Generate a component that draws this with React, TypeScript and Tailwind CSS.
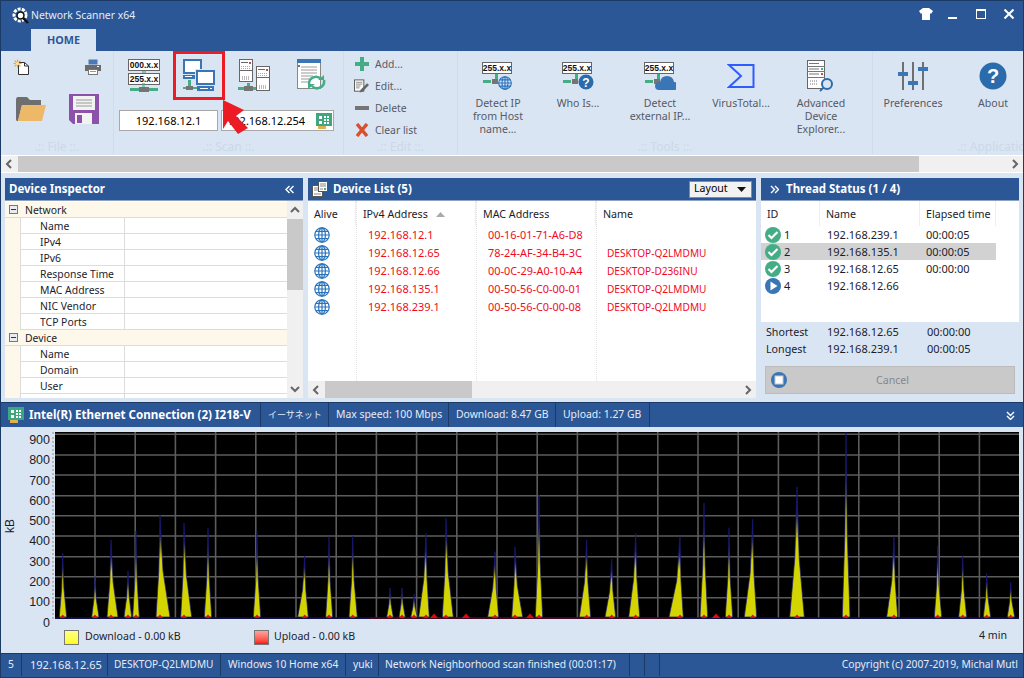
import React from "react";

const BLUE = "#3a75b5";
const GREEN = "#45ad85";
const GRAY = "#757575";

function FaintLabel({ text, className = "" }: { text: string; className?: string }) {
  return <div className={"h-[16px] shrink-0 text-center text-[12px] leading-[16px] text-[#cbd8ea] whitespace-nowrap " + className}>{text}</div>;
}

function Globe({ size = 16 }: { size?: number }) {
  return (
    <svg width={size} height={size} viewBox="0 0 16 16" fill="none" stroke="#2a74bd" strokeWidth="1.2" className="shrink-0">
      <circle cx="8" cy="8" r="7.2" />
      <ellipse cx="8" cy="8" rx="3.4" ry="7.2" />
      <path d="M8 .8v14.4M.8 8h14.4M1.8 4.4h12.4M1.8 11.6h12.4" />
    </svg>
  );
}

function DoubleChev({ dir, className = "" }: { dir: "left" | "right" | "down"; className?: string }) {
  const d = {
    left: "M4.5 1L1 4.5 4.5 8M8.5 1L5 4.5 8.5 8",
    right: "M1 1l3.5 3.5L1 8M5 1l3.5 3.5L5 8",
    down: "M1 1l3.5 3.5L8 1M1 5l3.5 3.5L8 5",
  }[dir];
  return (
    <svg width="9" height="9" viewBox="0 0 9 9" fill="none" stroke="#fff" strokeWidth="1.4" className={"shrink-0 " + className}>
      <path d={d} />
    </svg>
  );
}

function Logo() {
  return (
    <svg width="18" height="18" viewBox="0 0 18 18" className="shrink-0">
      <circle cx="8" cy="8" r="6" fill="none" stroke="#fff" strokeWidth="3" strokeDasharray="3 1.2" />
      <circle cx="8.5" cy="8.5" r="3.4" fill="#fff" stroke="#111" strokeWidth="1.4" />
      <path d="M11 11l5 5" stroke="#111" strokeWidth="2.4" />
    </svg>
  );
}

function NewFile() {
  return (
    <svg width="17" height="16" viewBox="0 0 17 16" className="shrink-0">
      <path d="M5.5 3.5h6l4 3.5v8.5h-10z" fill="#fff" stroke="#333" />
      <path d="M11.5 3.5v3.5h4" fill="none" stroke="#333" />
      <g stroke="#f0a030" strokeWidth="1.1">
        <path d="M4.5 0.5v8M0.5 4.5h8M1.6 1.6l5.8 5.8M7.4 1.6l-5.8 5.8" />
      </g>
      <circle cx="4.5" cy="4.5" r="1.6" fill="#fbe7a0" />
    </svg>
  );
}

function Printer() {
  return (
    <svg width="16" height="16" viewBox="0 0 16 16" className="shrink-0">
      <rect x="3.5" y="0.5" width="9" height="5" fill="#4a7ab5" />
      <path d="M0 6h16v6h-3v-2H3v2H0z" fill="#6b6b6b" />
      <rect x="3.5" y="10.5" width="9" height="5" fill="#fff" stroke="#777" />
      <path d="M5 12.5h6" stroke="#999" />
      <rect x="12" y="7" width="2" height="1" fill="#fff" />
    </svg>
  );
}

function Folder() {
  return (
    <svg width="30" height="24" viewBox="0 0 30 24" className="shrink-0">
      <path d="M0 3q0-3 2-3h9l3 3h11v5H6L2 24H1q-1 0-1-2z" fill="#6e6e6e" />
      <path d="M6 8h24l-4 16H2z" fill="#edb868" />
    </svg>
  );
}

function Floppy() {
  return (
    <svg width="30" height="30" viewBox="0 0 30 30" className="shrink-0">
      <path d="M0 0h30v30H4l-4-4z" fill="#8c52a9" />
      <rect x="4" y="2" width="22" height="14" fill="#f2f2f2" />
      <path d="M7 6h16M7 9h16M7 12h16" stroke="#9a9a9a" />
      <rect x="6" y="19" width="17" height="11" fill="#f2f2f2" />
      <rect x="8" y="21" width="5" height="8" fill="#8c52a9" />
    </svg>
  );
}

function Net({ x = 0, y = 0 }: { x?: number; y?: number }) {
  return (
    <g transform={`translate(${x} ${y})`}>
      <rect x="0" y="1" width="9" height="3" fill={GREEN} />
      <rect x="9" y="0" width="10" height="5" fill={GRAY} />
      <rect x="19" y="1" width="9" height="3" fill={GREEN} />
      <rect x="12" y="-4" width="3" height="4" fill={GREEN} opacity=".6" />
    </g>
  );
}

const MASK_FONT = "Liberation Sans, sans-serif";

function IpRange() {
  return (
    <svg width="32" height="33" viewBox="0 0 32 33" className="shrink-0">
      <rect x="0.5" y="0.5" width="31" height="11" fill="#fff" stroke="#666" />
      <text x="16" y="9" textAnchor="middle" fontSize="8.5" fontWeight="700" fontFamily={MASK_FONT} fill="#111">000.x.x</text>
      <rect x="0.5" y="14.5" width="31" height="11" fill="#fff" stroke="#666" />
      <text x="16" y="23" textAnchor="middle" fontSize="8.5" fontWeight="700" fontFamily={MASK_FONT} fill="#111">255.x.x</text>
      <rect x="14" y="12" width="4" height="2" fill={GREEN} opacity=".6" />
      <Net x={2} y={28} />
    </svg>
  );
}

function NetComputers() {
  return (
    <svg width="32" height="33" viewBox="0 0 32 33" className="shrink-0">
      <rect x="1" y="1" width="17" height="13" fill="#fff" stroke={BLUE} strokeWidth="2" />
      <rect x="0" y="16" width="13" height="4" fill={BLUE} />
      <rect x="2" y="17" width="7" height="1" fill="#fff" />
      <rect x="12" y="10" width="20" height="17" fill="#dae5f3" />
      <rect x="14" y="12" width="17" height="13" fill="#fff" stroke={BLUE} strokeWidth="2" />
      <rect x="14" y="27" width="17" height="5" fill={BLUE} />
      <rect x="17" y="29" width="8" height="1" fill="#fff" />
      <rect x="27" y="29" width="2" height="1" fill="#fff" />
      <rect x="5" y="21" width="3" height="6" fill={GREEN} />
      <rect x="3" y="27" width="7" height="4" fill={GRAY} />
      <rect x="0" y="28" width="3" height="2" fill={GREEN} />
      <rect x="10" y="28" width="4" height="2" fill={GREEN} />
    </svg>
  );
}

function Tower({ x, y, w, h }: { x: number; y: number; w: number; h: number }) {
  return (
    <g transform={`translate(${x} ${y})`}>
      <rect x="0.5" y="0.5" width={w - 1} height={h - 1} fill="#fff" stroke="#666" />
      <path d={`M2 3.5h${w - 7}`} stroke="#666" />
      <rect x={w - 4} y="3" width="2" height="2" fill="#c0504d" />
      <path d={`M2 7.5h${w - 4}M2 9.5h${w - 4}`} stroke="#aaa" strokeDasharray="1 1" />
      <path d={`M0 11.5h${w}`} stroke="#666" />
      <path d={`M3 ${h - 5}h${w - 6}M3 ${h - 3}h${w - 6}`} stroke="#777" strokeDasharray="1 1" />
    </g>
  );
}

function Servers() {
  return (
    <svg width="32" height="33" viewBox="0 0 32 33" className="shrink-0">
      <Tower x={1} y={0} w={14} h={23} />
      <Tower x={18} y={7} w={14} h={25} />
      <rect x="0" y="28" width="6" height="3" fill={GREEN} />
      <rect x="6" y="27" width="9" height="5" fill={GRAY} />
      <rect x="15" y="28" width="3" height="3" fill={GREEN} />
      <rect x="9" y="24" width="3" height="3" fill={GREEN} />
    </svg>
  );
}

function Report() {
  return (
    <svg width="29" height="32" viewBox="0 0 29 32" className="shrink-0">
      <rect x="0.5" y="0.5" width="23" height="29" fill="#fff" stroke="#888" />
      <rect x="0" y="0" width="24" height="4" fill={BLUE} />
      <path d="M4 8h16M4 11h16M4 14h16M4 17h12M4 20h10M4 23h8" stroke="#9a9a9a" />
      <rect x="1" y="6" width="2" height="2" fill="#777" />
      <path d="M12 25a7 7 0 0 1 12-5" fill="none" stroke={GREEN} strokeWidth="2.5" />
      <path d="M27 21a7 7 0 0 1-12 6" fill="none" stroke={GREEN} strokeWidth="2.5" />
      <path d="M21 21h6v-5zM18 25h-7v5z" fill={GREEN} />
    </svg>
  );
}

function Board({ size = 16 }: { size?: number }) {
  return (
    <svg width={size} height={size} viewBox="0 0 16 16" className="shrink-0">
      <rect x="0" y="0" width="16" height="13" fill="#3fa67f" />
      <path d="M3 3h3v3H3zM3 8h3v3H3z" fill="#fff" />
      <path d="M8 3h2v2H8zM11 3h2v2h-2zM8 6h2v2H8zM11 6h2v2h-2zM8 9h2v2H8zM11 9h2v2h-2z" fill="#fff" />
      <rect x="2" y="13" width="8" height="3" fill="#e0b050" />
    </svg>
  );
}

function ToolIcon({ children }: { children?: React.ReactNode }) {
  return (
    <svg width="32" height="32" viewBox="0 0 32 32" className="shrink-0">
      <rect x="0.5" y="2.5" width="29" height="11" fill="#fff" stroke="#666" />
      <text x="15" y="11" textAnchor="middle" fontSize="8.5" fontWeight="700" fontFamily={MASK_FONT} fill="#111">255.x.x</text>
      <rect x="13" y="14" width="3" height="7" fill={GREEN} />
      <rect x="1" y="20" width="8" height="3" fill={GREEN} />
      <rect x="10" y="19" width="6" height="5" fill={GRAY} />
      {children}
    </svg>
  );
}

function ServerGlass() {
  return (
    <svg width="28" height="32" viewBox="0 0 28 32" className="shrink-0">
      <rect x="0.5" y="0.5" width="17" height="28" fill="#fff" stroke="#666" />
      <path d="M2 3.5h10M0 6.5h18M2 9h10M0 11.5h18M2 14h10M0 17.5h18" stroke="#777" />
      <rect x="14" y="8" width="2" height="2" fill={GREEN} />
      <rect x="14" y="13" width="2" height="2" fill="#c0504d" />
      <path d="M3 21h8M3 24h8" stroke="#777" strokeDasharray="1 1" />
      <circle cx="20" cy="24" r="5" fill="#dae5f3" stroke="#2a6cab" strokeWidth="2" />
      <path d="M16 28l-3 3" stroke="#2a6cab" strokeWidth="2" />
    </svg>
  );
}

function ToolButton({ icon, lines, className = "" }: { icon: React.ReactNode; lines: string[]; className?: string }) {
  return (
    <div className={"w-[80px] shrink-0 flex flex-col items-center pt-[9px] " + className}>
      <div className="h-[32px] flex items-center justify-center">{icon}</div>
      <div className="mt-[5px] text-center text-[10.6px] leading-[13px] text-[#565a64] whitespace-nowrap">
        {lines.map((l) => <div key={l}>{l}</div>)}
      </div>
    </div>
  );
}

function Chev({ dir }: { dir: "left" | "right" | "up" | "down" }) {
  const d = { left: "M6 1L2 5l4 4", right: "M3 1l4 4-4 4", up: "M1 7l4-4 4 4", down: "M1 3l4 4 4-4" }[dir];
  return (
    <svg width="10" height="10" viewBox="0 0 10 10" fill="none" stroke="#666" strokeWidth="2" className="shrink-0">
      <path d={d} />
    </svg>
  );
}

function RibbonScroll() {
  return (
    <div className="h-[18px] border-y border-white bg-[#c9c9c9] flex shrink-0">
      <div className="w-[17px] bg-[#f0f0f0] flex items-center justify-center">
        <Chev dir="left" />
      </div>
      <div className="flex-1" />
      <div className="w-[104px] bg-[#f0f0f0] flex items-center justify-end pr-[3px]">
        <Chev dir="right" />
      </div>
    </div>
  );
}

function Ribbon() {
  const edit = [
    { label: "Add...", icon: <svg width="14" height="14" viewBox="0 0 14 14"><path d="M5 0h4v5h5v4H9v5H5V9H0V5h5z" fill={GREEN} /></svg> },
    { label: "Edit...", icon: <svg width="16" height="16" viewBox="0 0 16 16" className="-ml-[1px]"><rect x="0.5" y="1.5" width="10" height="12" fill="#fff" stroke="#555" /><path d="M2 4h7M2 6h7M2 8h5M2 10h4" stroke="#888" /><path d="M14 5l2 2-7 7-3 1 1-3z" fill="#666" /></svg> },
    { label: "Delete", icon: <div className="w-[14px] h-[4px] bg-[#757575]" /> },
    { label: "Clear list", icon: <svg width="14" height="14" viewBox="0 0 14 14"><path d="M2 1l10 12M12 1L2 13" stroke="#d9502e" strokeWidth="3.4" /></svg> },
  ];
  return (
    <div className="h-[104px] shrink-0 bg-[#dae5f3] flex overflow-hidden">
      <div className="w-[113px] shrink-0 border-r border-[#d0dcec] flex flex-col pt-[8px]">
        <div className="flex justify-between pl-[12px] pr-[12px] h-[16px] shrink-0">
          <NewFile />
          <Printer />
        </div>
        <div className="flex items-center pl-[15px] gap-[23px] mt-[19px] h-[30px] shrink-0">
          <Folder />
          <Floppy />
        </div>
        <FaintLabel text=".:: File ::." className="mt-[15px]" />
      </div>
      <div className="w-[230px] shrink-0 border-r border-[#d0dcec] flex flex-col pt-[8px]">
        <div className="flex pl-[14px] h-[33px] shrink-0">
          <IpRange />
          <div className="ml-[23px]"><NetComputers /></div>
          <div className="ml-[23px]"><Servers /></div>
          <div className="ml-[27px]"><Report /></div>
        </div>
        <div className="flex mt-[18px] ml-[5px] gap-[3px] h-[21px] shrink-0 text-[11px] leading-[19px] text-black">
          <div className="w-[99px] border border-[#a8a8a8] bg-white text-center">192.168.12.1</div>
          <div className="w-[113px] border border-[#a8a8a8] bg-white flex items-center pl-[5px] justify-between pr-[1px]">
            <span>192.168.12.254</span>
            <Board />
          </div>
        </div>
        <FaintLabel text=".:: Scan ::." className="mt-[8px]" />
      </div>
      <div className="w-[114px] shrink-0 border-r border-[#d0dcec] flex flex-col pt-[2px]">
        {edit.map((e) => (
          <div key={e.label} className="h-[22px] shrink-0 flex items-center pl-[11px] text-[10.4px] text-[#565a64]">
            <div className="w-[14px] flex justify-center items-center mr-[6px]">{e.icon}</div>
            <span className="pt-[2px]">{e.label}</span>
          </div>
        ))}
        <FaintLabel text=".:: Edit ::." className="-mt-[2px]" />
      </div>
      <div className="w-[415px] shrink-0 border-r border-[#d0dcec] flex flex-col">
        <div className="flex h-[88px] shrink-0">
          <ToolButton lines={["Detect IP", "from Host", "name..."]} icon={<ToolIcon><svg x="16" y="16" width="14" height="14" viewBox="0 0 16 16" fill="none" stroke="#2a74bd" strokeWidth="1.3"><circle cx="8" cy="8" r="7.2" /><ellipse cx="8" cy="8" rx="3.4" ry="7.2" /><path d="M8 .8v14.4M.8 8h14.4M1.8 4.4h12.4M1.8 11.6h12.4" /></svg></ToolIcon>} />
          <ToolButton lines={["Who Is..."]} icon={
            <ToolIcon>
              <circle cx="24" cy="22" r="7.5" fill="#2a6cab" />
              <text x="24" y="26.5" textAnchor="middle" fontSize="12" fontWeight="700" fontFamily="Liberation Sans, sans-serif" fill="#fff">?</text>
            </ToolIcon>} />
          <ToolButton className="ml-[2px]" lines={["Detect", "external IP..."]} icon={
            <ToolIcon>
              <path d="M15 30q-4 0-4-4t5-4q1-6 7-6t7 6q4 0 4 4t-4 4z" fill={BLUE} />
            </ToolIcon>} />
          <ToolButton className="ml-[1px]" lines={["VirusTotal..."]} icon={
            <svg width="28" height="26" viewBox="0 0 28 26" fill="none" stroke="#2f5cff" strokeWidth="2" className="shrink-0"><path d="M2 2h24.5v22H2l12-11z" /></svg>} />
          <ToolButton lines={["Advanced", "Device", "Explorer..."]} icon={<ServerGlass />} />
        </div>
        <FaintLabel text=".:: Tools ::." />
      </div>
      <div className="flex-1 flex flex-col min-w-0">
        <div className="flex h-[88px] shrink-0">
          <ToolButton lines={["Preferences"]} icon={
            <svg width="32" height="30" viewBox="0 0 32 30" className="shrink-0">
              <path d="M6 1v28M16 1v28M26 1v28" stroke="#6f6f6f" strokeWidth="2" />
              <rect x="1" y="11" width="10" height="4" fill={BLUE} />
              <rect x="11" y="20" width="10" height="4" fill={BLUE} />
              <rect x="21" y="6" width="10" height="4" fill={BLUE} />
            </svg>} />
          <ToolButton className="!w-[60px] ml-[10px]" lines={["About"]} icon={
            <svg width="28" height="28" viewBox="0 0 28 28" className="shrink-0">
              <circle cx="14" cy="14" r="13.5" fill="#2a6cab" />
              <text x="14" y="21" textAnchor="middle" fontSize="20" fontWeight="700" fontFamily="Liberation Sans, sans-serif" fill="#fff">?</text>
            </svg>} />
        </div>
        <FaintLabel text=".:: Application ::." className="pl-[84px] !text-left" />
      </div>
    </div>
  );
}

function PanelTitle({ children }: { children: React.ReactNode }) {
  return (
    <div className="h-[23px] shrink-0 bg-[#2b5797] border-b border-[#8ca2c3] flex items-center text-white text-[11.5px] font-bold whitespace-nowrap">
      {children}
    </div>
  );
}

const groups: { title: string; rows: string[] }[] = [
  { title: "Network", rows: ["Name", "IPv4", "IPv6", "Response Time", "MAC Address", "NIC Vendor", "TCP Ports"] },
  { title: "Device", rows: ["Name", "Domain", "User", ""] },
];

function Inspector() {
  return (
    <div className="w-[298px] shrink-0 flex flex-col bg-white overflow-hidden">
      <PanelTitle>
        <span className="pl-[4px] flex-1">Device Inspector</span>
        <DoubleChev dir="left" className="mr-[9px]" />
      </PanelTitle>
      <div className="flex-1 flex min-h-0 overflow-hidden">
        <div className="flex-1 min-w-0 overflow-hidden pt-[1px] text-[10.4px] text-[#1c1c2c]">
          {groups.map((g) => (
            <div key={g.title}>
              <div className="h-[16px] bg-[#fdf8ea] border-b border-[#dcdcdc] flex items-center">
                <div className="w-[9px] h-[9px] ml-[4px] mr-[7px] border border-[#777] bg-[#e8ecf2] flex items-center justify-center">
                  <div className="w-[5px] h-[1px] bg-[#333]" />
                </div>
                <span className="pt-[2px]">{g.title}</span>
              </div>
              {g.rows.map((r, i) => (
                <div key={g.title + i} className="h-[16px] flex bg-[#fdf8ea]">
                  <div className="w-[15px] shrink-0" />
                  <div className="w-[105px] shrink-0 bg-white border-l border-b border-r border-[#dcdcdc] pl-[19px] pt-[1px] leading-[15px]">{r}</div>
                  <div className="flex-1 bg-white border-b border-[#dcdcdc]" />
                </div>
              ))}
            </div>
          ))}
        </div>
        <div className="w-[16px] shrink-0 bg-[#f0f0f0] flex flex-col">
          <div className="h-[18px] flex items-center justify-center"><Chev dir="up" /></div>
          <div className="h-[71px] bg-[#c9c9c9]" />
          <div className="flex-1" />
          <div className="h-[18px] flex items-center justify-center"><Chev dir="down" /></div>
        </div>
      </div>
    </div>
  );
}

const devices = [
  ["192.168.12.1", "00-16-01-71-A6-D8", ""],
  ["192.168.12.65", "78-24-AF-34-B4-3C", "DESKTOP-Q2LMDMU"],
  ["192.168.12.66", "00-0C-29-A0-10-A4", "DESKTOP-D236INU"],
  ["192.168.135.1", "00-50-56-C0-00-01", "DESKTOP-Q2LMDMU"],
  ["192.168.239.1", "00-50-56-C0-00-08", "DESKTOP-Q2LMDMU"],
];

function DeviceList() {
  const cols = [
    { w: "w-[49px]", head: "Alive", cells: devices.map((_, i) => <Globe key={i} />), pad: "pl-[6px]", size: "" },
    { w: "w-[120px]", head: "IPv4 Address", cells: devices.map((d) => d[0]), pad: "pl-[11px]", sort: true, size: "text-[11px]" },
    { w: "w-[120px]", head: "MAC Address", cells: devices.map((d) => d[1]), pad: "pl-[11px]", size: "text-[10.9px]" },
    { w: "w-[159px]", head: "Name", cells: devices.map((d) => d[2]), pad: "pl-[10px]", last: true, size: "text-[10.1px] pt-[1px]" },
  ];
  return (
    <div className="w-[448px] shrink-0 flex flex-col bg-white overflow-hidden">
      <PanelTitle>
        <svg width="16" height="16" viewBox="0 0 16 16" className="ml-[4px] mr-[5px] shrink-0">
          <rect x="0.5" y="4.5" width="10" height="11" fill="#fff" stroke="#555" />
          <path d="M2 7h7M2 9h7M2 13h7" stroke="#888" />
          <rect x="6.5" y="0.5" width="9" height="10" fill="#fff" stroke="#555" />
          <path d="M8 3h6M8 5h6M8 8h3" stroke="#888" />
          <rect x="12" y="7" width="2" height="2" fill={GREEN} />
        </svg>
        <span className="flex-1">Device List (5)</span>
        <div className="w-[63px] h-[17px] mr-[4px] bg-[#f2f2f2] border border-[#8a8a8a] flex items-center pl-[4px] text-[10.6px] font-normal text-black">
          <span className="flex-1">Layout</span>
          <svg width="9" height="5" viewBox="0 0 9 5" className="mr-[5px] shrink-0"><path d="M0 0h9L4.5 5z" fill="#111" /></svg>
        </div>
      </PanelTitle>
      <div className="flex-1 min-h-0 flex">
        {cols.map((c) => (
          <div key={c.head} className={c.w + " shrink-0 border-r border-dotted border-[#e2e2e2] last:border-r-0"}>
            <div className={"h-[25px] flex items-center pt-[1px] text-[10.7px] text-[#1c1c2c] border-r border-[#eeeeee] pl-[6px] " + (c.last ? "border-r-0" : "")}>
              {c.head}
              {c.sort && <svg width="9" height="5" viewBox="0 0 9 5" className="ml-[8px]"><path d="M4.5 0L9 5H0z" fill="#aaa" /></svg>}
            </div>
            <div className={c.pad + " " + c.size}>
              {c.cells.map((v, i) => (
                <div key={i} className="h-[18px] flex items-center text-[#f00a1e] whitespace-nowrap">{v}</div>
              ))}
            </div>
          </div>
        ))}
      </div>
      <div className="h-[17px] shrink-0 bg-[#f0f0f0] flex items-center">
        <div className="w-[17px] flex justify-center"><Chev dir="left" /></div>
        <div className="w-[147px] h-full bg-[#c9c9c9]" />
        <div className="flex-1" />
        <div className="w-[17px] flex justify-center"><Chev dir="right" /></div>
      </div>
    </div>
  );
}

function StatusDot({ play }: { play?: boolean }) {
  return (
    <svg width="16" height="16" viewBox="0 0 16 16" className="shrink-0">
      <circle cx="8" cy="8" r="8" fill={play ? BLUE : GREEN} />
      {play ? <path d="M5.5 3.5l7 4.5-7 4.5z" fill="#fff" /> : <path d="M3.5 8l3 3 6-6" fill="none" stroke="#fff" strokeWidth="2.2" />}
    </svg>
  );
}

const threads = [
  ["1", "192.168.239.1", "00:00:05"],
  ["2", "192.168.135.1", "00:00:05"],
  ["3", "192.168.12.65", "00:00:00"],
  ["4", "192.168.12.66", ""],
];

function ThreadStatus() {
  return (
    <div className="w-[258px] shrink-0 flex flex-col overflow-hidden">
      <PanelTitle>
        <DoubleChev dir="right" className="ml-[9px] mr-[7px]" />
        <span>Thread Status (1 / 4)</span>
      </PanelTitle>
      <div className="h-[121px] shrink-0 bg-white text-[11px] text-[#1c1c2c]">
        <div className="h-[25px] flex items-center w-[235px] text-[10.7px] whitespace-nowrap">
          <div className="w-[59px] border-r border-[#eeeeee] pl-[6px] pt-[1px] leading-[24px]">ID</div>
          <div className="w-[100px] border-r border-[#eeeeee] pl-[6px] pt-[1px] leading-[24px]">Name</div>
          <div className="w-[76px] border-r border-[#eeeeee] pl-[6px] pt-[1px] leading-[24px]">Elapsed time</div>
        </div>
        {threads.map((t, i) => (
          <div key={t[0]} className={"h-[17px] w-[235px] flex items-center " + (i === 1 ? "bg-[#d2d2d2]" : "")}>
            <div className="w-[59px] flex items-center pl-[4px] gap-[3px]">
              <StatusDot play={i === 3} />
              <span className="pt-[1px]">{t[0]}</span>
            </div>
            <div className="w-[100px] pl-[7px] pt-[1px]">{t[1]}</div>
            <div className="w-[76px] pl-[6px] pt-[1px]">{t[2]}</div>
          </div>
        ))}
      </div>
      <div className="flex-1 px-[4px] pt-[2px] text-[11px] text-[#1c1c2c] bg-[#dae5f3]">
        {[["Shortest", "192.168.12.65", "00:00:00"], ["Longest", "192.168.239.1", "00:00:05"]].map((r) => (
          <div key={r[0]} className="h-[17px] flex items-center">
            <div className="w-[62px] pl-[1px] text-[10.7px]">{r[0]}</div>
            <div className="w-[100px]">{r[1]}</div>
            <div>{r[2]}</div>
          </div>
        ))}
        <div className="mt-[8px] h-[28px] bg-[#c9c9c9] border border-[#bcbcbc] flex items-center pl-[5px] text-[#85888f] text-[10.6px]">
          <svg width="16" height="16" viewBox="0 0 16 16" className="shrink-0">
            <circle cx="8" cy="8" r="8" fill={BLUE} />
            <rect x="4" y="4" width="8" height="8" fill="#fff" stroke="#c9c9c9" />
          </svg>
          <span className="flex-1 text-center pr-[16px] pt-[1px]">Cancel</span>
        </div>
      </div>
    </div>
  );
}

function NetBar() {
  const cells = [
    { t: "イーサネット", w: "w-[68px]", cls: "font-['Noto_Sans_CJK_JP',sans-serif] text-[9px] pl-[7px]" },
    { t: "Max speed: 100 Mbps", w: "w-[120px]", cls: "pl-[7px]" },
    { t: "Download: 8.47 GB", w: "w-[107px]", cls: "pl-[7px]" },
    { t: "Upload: 1.27 GB", w: "w-[94px]", cls: "pl-[7px]" },
  ];
  return (
    <div className="h-[25px] shrink-0 bg-[#2b5797] border-t border-[#1c3a66] flex items-center text-[#e6ecf5] text-[10.4px]">
      <div className="w-[260px] h-full flex items-center pl-[7px] border-r border-[#1c3a66]">
        <Board />
        <span className="ml-[5px] font-bold text-white text-[11.6px] whitespace-nowrap">Intel(R) Ethernet Connection (2) I218-V</span>
      </div>
      {cells.map((c) => (
        <div key={c.t} className={c.w + " h-full shrink-0 flex items-center border-r border-[#1c3a66] whitespace-nowrap " + c.cls}>{c.t}</div>
      ))}
      <div className="flex-1" />
      <DoubleChev dir="down" className="mr-[8px]" />
    </div>
  );
}

const spikes: [number, number, number, number][] = [
  [62.7, 553, 59.3, 66.7], [95, 576.7, 91.7, 99], [111, 540, 107, 118], [128, 571, 124, 131.7], [136, 531, 132.7, 139.3],
  [160, 515, 156, 170], [184, 523, 180.7, 191.7], [208, 527.7, 204.3, 211.7], [257, 531, 253.3, 260.7], [304.7, 555.7, 297.7, 308.3],
  [329, 536.7, 325.7, 332.7], [352.7, 536, 349, 357.3], [390, 588, 386.7, 393.3], [402, 588, 399, 405.3], [414, 594.3, 410.7, 417.3],
  [426, 533.3, 418.7, 429.3], [446, 518.3, 442.3, 453.3], [495, 551.7, 487.7, 498.7], [515, 546.7, 511.7, 522.7], [539, 495, 535.3, 542.7],
  [586.7, 540, 579.3, 590.7], [611.7, 559, 605, 615.7], [635.7, 533.3, 628.7, 639.7], [680, 536.7, 669, 683.3], [704, 502.7, 700, 707.7],
  [729, 527.7, 725.3, 732.7], [752.7, 519.3, 744.3, 756.7], [797, 486.7, 789.7, 804.3], [846, 432.3, 842.3, 850], [894, 536.7, 886.7, 897.7],
  [937.7, 545.7, 934.3, 941.7], [962.7, 555.7, 958.7, 966.7], [986.7, 573.3, 983.3, 990.7], [1010.7, 582.3, 1007.3, 1014.7],
];
const extraRed = [434, 466, 530, 716];

function ChartSvg() {
  const base = 617;
  const hLines = [434.3, 455, 475, 495.7, 515.7, 536, 556.7, 576.7, 597.7];
  const vLines = Array.from({ length: 23 }, (_, i) => 95 + i * 40.2);
  return (
    <svg width="964" height="187" viewBox="55 432 964 187" className="block bg-black shrink-0">
      <defs>
        <linearGradient id="sp" x1="0" y1="0" x2="0" y2="1">
          <stop offset="0" stopColor="#18187a" />
          <stop offset="0.2" stopColor="#20206e" />
          <stop offset="0.42" stopColor="#d4d400" />
          <stop offset="1" stopColor="#d4d400" />
        </linearGradient>
      </defs>
      {hLines.map((y) => <path key={y} d={`M55 ${y}H1020`} stroke="#5c5c5c" strokeWidth="1.6" />)}
      {vLines.map((x) => <path key={x} d={`M${x} 432V618`} stroke="#5c5c5c" strokeWidth="1.6" />)}
      {spikes.map(([cx, top, l, r]) => {
        const h = base - top;
        const pts = `${l},${base} ${cx - 0.3 * (cx - l)},${top + h * 0.55} ${cx},${top} ${cx + 0.3 * (r - cx)},${top + h * 0.55} ${r},${base}`;
        return <polygon key={cx} points={pts} fill="url(#sp)" stroke="#1a1a78" strokeWidth="0.7" />;
      })}
      <path d="M55 618.2H1020" stroke="#10104c" strokeWidth="2" />
      <path d="M370 618H680" stroke="#700000" strokeWidth="1" />
      {spikes.map(([cx]) => <path key={cx} d={`M${cx - 3} 618L${cx} 614.5L${cx + 3} 618z`} fill="#e00a0a" />)}
      {extraRed.map((x) => <path key={x} d={`M${x - 4} 618L${x} 613.5L${x + 4} 618z`} fill="#e00a0a" />)}
    </svg>
  );
}

function ChartArea() {
  const ys = ["900", "800", "700", "600", "500", "400", "300", "200", "100", "0"];
  return (
    <div className="h-[226px] shrink-0 bg-[#dae5f3] flex flex-col">
      <div className="flex pt-[5px] h-[192px] shrink-0">
        <div className="w-[19px] shrink-0 flex items-center justify-center">
          <span className="-rotate-90 text-[12px] text-[#1c1c2c] font-['Liberation_Sans',sans-serif]">kB</span>
        </div>
        <div className="w-[30px] shrink-0 flex flex-col items-end -mt-[2px] font-['Liberation_Sans',sans-serif] text-[12.5px] text-[#1c1c2c]">
          {ys.map((y) => <div key={y} className="h-[20.3px] shrink-0 leading-[20.3px]">{y}</div>)}
        </div>
        <div className="w-[5px] shrink-0 pl-[2px]">
          <div className="w-[2px] h-[187px] border-l-2 border-dotted border-[#b8b8b8]" />
        </div>
        <ChartSvg />
      </div>
      <div className="flex items-center h-[20px] shrink-0 mt-[8px] text-[10.6px] text-[#1c1c2c]">
        <div className="w-[15px] h-[15px] ml-[63px] border border-[#777] bg-gradient-to-b from-[#ffff80] to-[#ffff00]" />
        <span className="ml-[6px] w-[169px]">Download - 0.00 kB</span>
        <div className="w-[15px] h-[15px] border border-[#777] bg-gradient-to-b from-[#ffa0a0] to-[#ff0000]" />
        <span className="ml-[5px]">Upload - 0.00 kB</span>
        <span className="ml-auto mr-[16px] -mt-[2px]">4 min</span>
      </div>
    </div>
  );
}

function StatusBar() {
  const cells = [
    { t: "5", w: "w-[21px]", p: "pl-[7px]" },
    { t: "192.168.12.65", w: "w-[86px]", p: "pl-[8px] text-[11px]" },
    { t: "DESKTOP-Q2LMDMU", w: "w-[113px]", p: "pl-[6px] text-[10.1px]" },
    { t: "Windows 10 Home x64", w: "w-[125px]", p: "pl-[7px]" },
    { t: "yuki", w: "w-[33px]", p: "pl-[7px]" },
    { t: "Network Neighborhood scan finished (00:01:17)", w: "w-[251px]", p: "pl-[6px]" },
    { t: "", w: "w-[15px]", p: "" },
    { t: "", w: "w-[15px]", p: "" },
  ];
  return (
    <div className="h-[24px] shrink-0 bg-[#2b5797] border-t border-[#1c3a66] flex items-center pb-[1px] text-[#e6ecf5] text-[10.3px]">
      {cells.map((c, i) => (
        <div key={i} className={c.w + " h-full shrink-0 flex items-center border-r border-[#1c3a66] whitespace-nowrap " + c.p}>{c.t}</div>
      ))}
      <div className="flex-1 text-right pr-[5px] whitespace-nowrap">Copyright (c) 2007-2019, Michal Mutl</div>
    </div>
  );
}

export default function App() {
  return (
    <div className="relative w-[1024px] h-[678px] overflow-hidden border border-[#1c3a66] bg-[#dae5f3] flex flex-col font-['Noto_Sans',sans-serif]">
      <div className="h-[50px] shrink-0 bg-[#2b5797] flex flex-col">
        <div className="h-[28px] flex items-start">
          <div className="flex items-center pl-[11px] pt-[3px] h-[26px]">
            <Logo />
            <span className="ml-[1px] text-[10.4px] text-[#e6ecf5] whitespace-nowrap">Network Scanner x64</span>
          </div>
          <div className="flex-1" />
          <div className="flex items-center pt-[7px]">
            <svg width="14" height="12" viewBox="0 0 14 12" className="shrink-0"><path d="M4 0h6l4 3-2 3-1-1v7H3V5L2 6 0 3z" fill="#fff" /></svg>
            <div className="w-[9px] h-[2px] bg-white ml-[15px] mt-[8px]" />
            <div className="w-[10px] h-[10px] border border-white border-t-2 ml-[19px]" />
            <svg width="10" height="10" viewBox="0 0 10 10" className="ml-[18px] mr-[9px] shrink-0"><path d="M0.5 0.5l9 9M9.5 0.5l-9 9" stroke="#fff" strokeWidth="2" /></svg>
          </div>
        </div>
        <div className="h-[22px] flex pl-[30px]">
          <div className="w-[65px] bg-[#dae5f3] text-center text-[#2b5797] font-bold text-[10.8px] leading-[22px]">HOME</div>
        </div>
      </div>
      <Ribbon />
      <RibbonScroll />
      <div className="h-[229px] shrink-0 flex gap-[5px] pt-[5px] pb-[4px] pl-[4px]">
        <Inspector />
        <DeviceList />
        <ThreadStatus />
      </div>
      <NetBar />
      <ChartArea />
      <StatusBar />

      <div className="absolute left-[172px] top-[50px] w-[52px] h-[49px] border-[3px] border-[#ed1c24] pointer-events-none" />
      <svg width="32" height="40" viewBox="0 0 32 40" className="absolute left-[220px] top-[97px] pointer-events-none">
        <path d="M2 2L23 12L15 18L27 30L17 36L7 23L2 31z" fill="#ed1c24" />
      </svg>
    </div>
  );
}
